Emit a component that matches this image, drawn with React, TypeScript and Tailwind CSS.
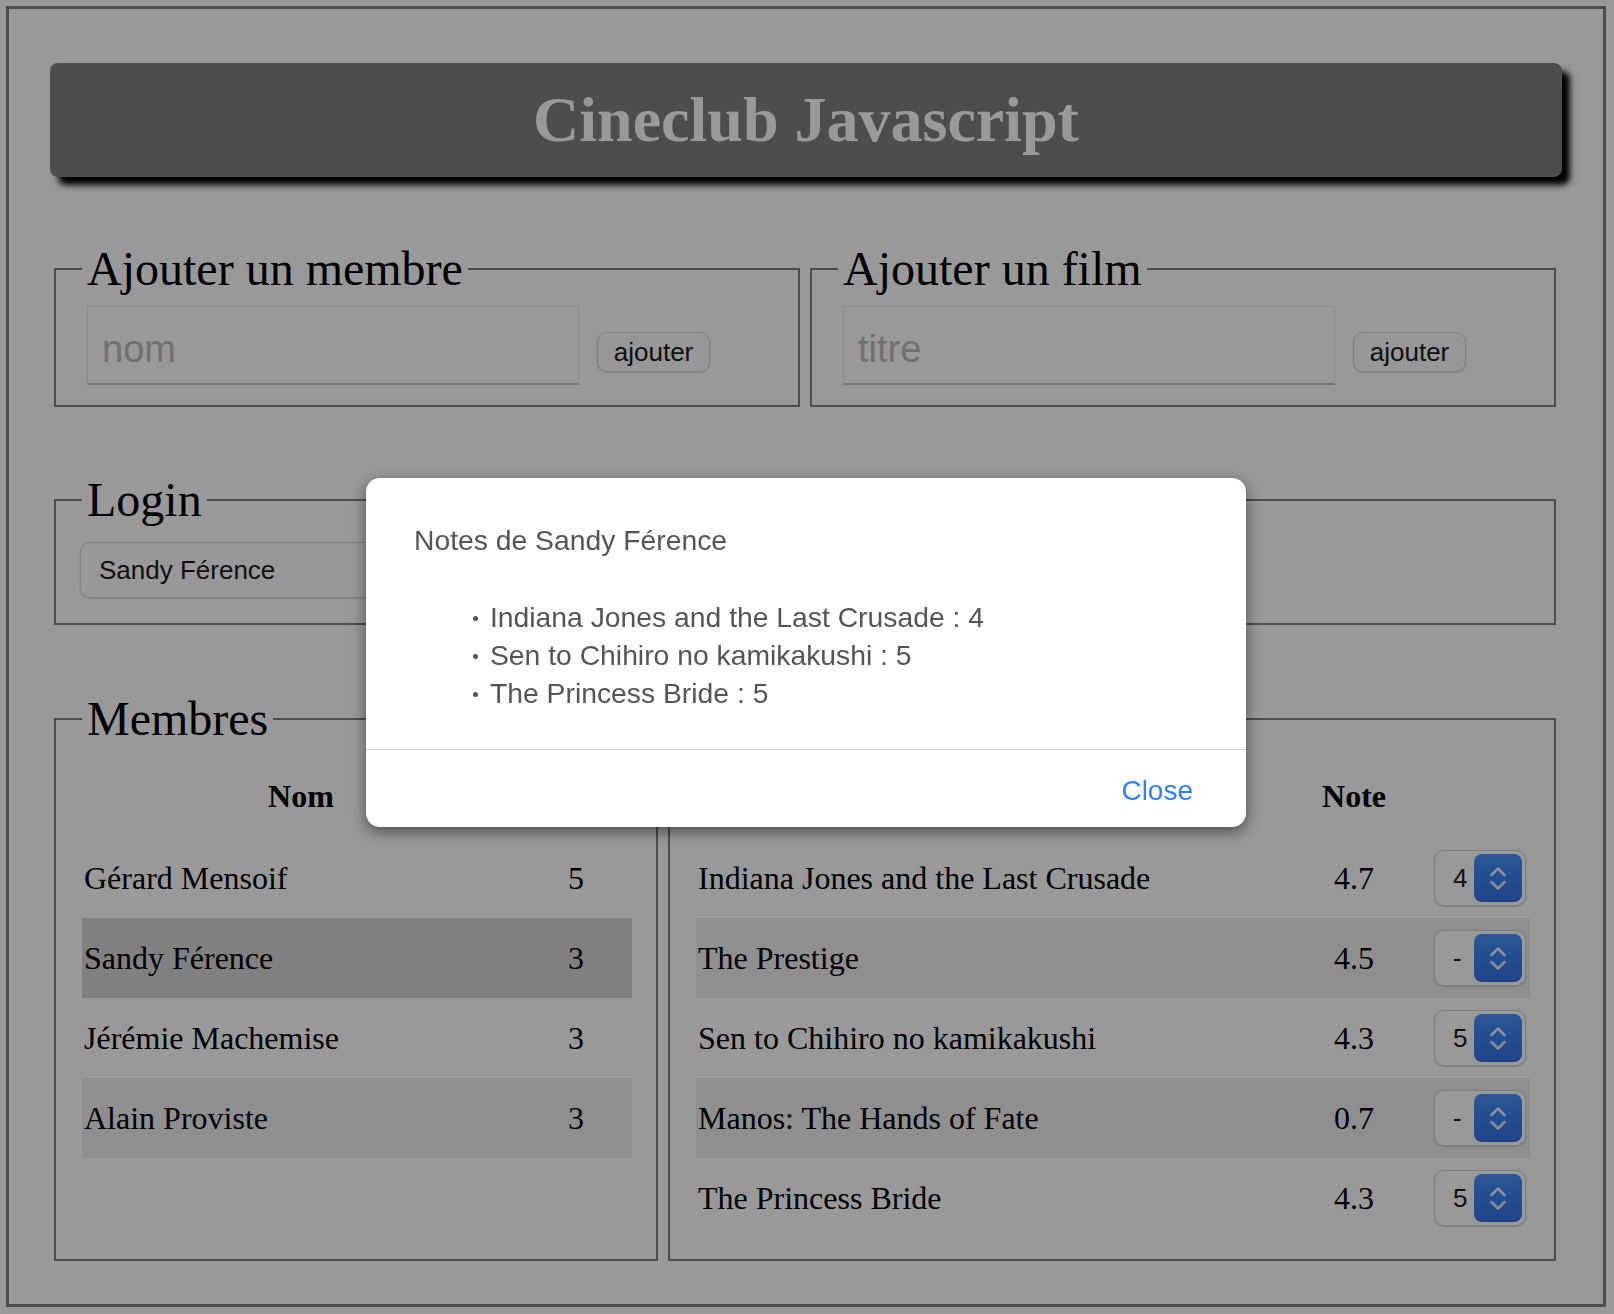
import React from "react";

const serif = "font-['Liberation_Serif','Times_New_Roman',serif]";
const sans = "font-['Liberation_Sans',Arial,sans-serif]";

const membres = [
  { nom: "Gérard Mensoif", n: 5 },
  { nom: "Sandy Férence", n: 3 },
  { nom: "Jérémie Machemise", n: 3 },
  { nom: "Alain Proviste", n: 3 },
];

const films = [
  { titre: "Indiana Jones and the Last Crusade", note: "4.7", vote: "4" },
  { titre: "The Prestige", note: "4.5", vote: "-" },
  { titre: "Sen to Chihiro no kamikakushi", note: "4.3", vote: "5" },
  { titre: "Manos: The Hands of Fate", note: "0.7", vote: "-" },
  { titre: "The Princess Bride", note: "4.3", vote: "5" },
];

const notes = [
  "Indiana Jones and the Last Crusade : 4",
  "Sen to Chihiro no kamikakushi : 5",
  "The Princess Bride : 5",
];

const Legend = ({ children }: { children: React.ReactNode }) => (
  <legend className="px-[5px] text-[48px] leading-[53px] text-black">
    {children}
  </legend>
);

const AddForm = ({ title, placeholder }: { title: string; placeholder: string }) => (
  <fieldset className="w-[746px] border-2 border-[#808080] px-[26px] pt-[11px] pb-[20px]">
    <Legend>{title}</Legend>
    <div className={"flex items-start " + sans}>
      <input
        placeholder={placeholder}
        className="ml-[5px] w-[492px] h-[79px] border border-[#e8e8e8] border-b-2 border-b-[#c6c6c6] bg-transparent pl-[14px] pt-[8px] text-[38px] text-black outline-none placeholder:text-[#bcbcbc]"
      />
      <button className="ml-[18px] mt-[26px] w-[113px] h-[40px] rounded-[10px] border border-[#d6d6d6] bg-[#fcfcfc] text-[26px] leading-none text-[#1a1a1a] shadow-[0_1px_2px_rgba(0,0,0,0.15)]">
        ajouter
      </button>
    </div>
  </fieldset>
);

const VoteSelect = ({ value }: { value: string }) => (
  <div className={"flex items-center w-[92px] h-[56px] rounded-[10px] border border-[#d2d2d2] bg-white shadow-[0_1px_2px_rgba(0,0,0,0.15)] " + sans}>
    <span className="pl-[18px] text-[26px] text-[#1a1a1a]">{value}</span>
    <div className="ml-auto mr-[3px] w-[48px] h-[48px] rounded-[8px] bg-gradient-to-b from-[#4a92fc] to-[#3270e6]">
      <svg width="48" height="48" viewBox="0 0 48 48" fill="none">
        <path d="M17.5 21 L24 14.5 L30.5 21" stroke="#ffffff" strokeOpacity="0.85" strokeWidth="2.6" strokeLinecap="round" strokeLinejoin="round" />
        <path d="M17.5 28 L24 34.5 L30.5 28" stroke="#ffffff" strokeOpacity="0.85" strokeWidth="2.6" strokeLinecap="round" strokeLinejoin="round" />
      </svg>
    </div>
  </div>
);

export default function App() {
  return (
    <div className={"relative w-[1614px] h-[1314px] bg-white " + serif}>
      <div className="ml-[6px] pt-[6px]">
        <div className="w-[1600px] h-[1301px] border-[3px] border-[#808080]">
          {/* header */}
          <div className="mx-[41px] mt-[54px] h-[114px] flex items-center justify-center rounded-[8px] bg-[#808080] shadow-[8px_8px_6px_#000]">
            <h1 className="text-[64px] font-bold text-white leading-[74px]">
              Cineclub Javascript
            </h1>
          </div>

          <div className="ml-[45px] w-[1502px]">
            {/* ajouter */}
            <div className="mt-[65px] flex gap-[10px]">
              <AddForm title="Ajouter un membre" placeholder="nom" />
              <AddForm title="Ajouter un film" placeholder="titre" />
            </div>

            {/* login */}
            <fieldset className="mt-[66px] border-2 border-[#808080] px-[26px] pt-[16px] pb-[25px]">
              <Legend>Login</Legend>
              <div className={"-ml-[2px] flex items-center w-[420px] h-[56px] rounded-[10px] border border-[#d8d8d8] bg-[#fdfdfd] pl-[18px] text-[26px] text-[#1a1a1a] shadow-[0_1px_2px_rgba(0,0,0,0.12)] " + sans}>
                Sandy Férence
              </div>
            </fieldset>

            {/* tables */}
            <div className="mt-[67px] flex gap-[10px]">
              <fieldset className="w-[604px] border-2 border-[#808080] pl-[26px] pr-[24px] pt-[9px] pb-[21px]">
                <Legend>Membres</Legend>
                <div className="grid grid-cols-[438px_1fr] h-[84px] items-center text-[32px] font-bold">
                  <div className="text-center">Nom</div>
                  <div className="text-center">Votes</div>
                </div>
                {membres.map((m, i) => (
                  <div
                    key={m.nom}
                    className={
                      "grid grid-cols-[438px_1fr] h-[80px] items-center text-[32px] text-black " +
                      (i === 1 ? "bg-[#d5d5d5]" : i % 2 === 1 ? "bg-[#eeeeee]" : "")
                    }
                  >
                    <div className="pl-[2px]">{m.nom}</div>
                    <div className="text-center">{m.n}</div>
                  </div>
                ))}
              </fieldset>

              <fieldset className="w-[888px] border-2 border-[#808080] pl-[26px] pr-[24px] pt-[9px] pb-[21px]">
                <Legend>Films</Legend>
                <div className="grid grid-cols-[598px_120px_1fr] h-[84px] items-center text-[32px] font-bold">
                  <div className="text-center">Titre</div>
                  <div className="text-center">Note</div>
                  <div />
                </div>
                {films.map((f, i) => (
                  <div
                    key={f.titre}
                    className={
                      "grid grid-cols-[598px_120px_1fr] h-[80px] items-center text-[32px] text-black " +
                      (i % 2 === 1 ? "bg-[#eeeeee]" : "")
                    }
                  >
                    <div className="pl-[2px]">{f.titre}</div>
                    <div className="text-center">{f.note}</div>
                    <div className="flex justify-end pr-[4px]">
                      <VoteSelect value={f.vote} />
                    </div>
                  </div>
                ))}
              </fieldset>
            </div>
          </div>
        </div>
      </div>

      {/* modal */}
      <div className="fixed inset-0 bg-black/40">
        <div className={"absolute left-[366px] top-[478px] w-[880px] rounded-[14px] bg-white shadow-[0_5px_15px_rgba(0,0,0,0.5)] " + sans}>
          <div className="px-[48px] pt-[46px] pb-[37px] text-[#555555]">
            <div className="text-[28.3px] leading-[32px]">Notes de Sandy Férence</div>
            <ul className="mt-[42px] pl-[59px]">
              {notes.map((n) => (
                <li key={n} className="flex items-center h-[38px] text-[28.3px]">
                  <span className="mr-[12px] mt-[2px] w-[5px] h-[5px] rounded-full bg-[#555555]" />
                  {n}
                </li>
              ))}
            </ul>
          </div>
          <div className="border-t border-[#d9d9d9] h-[78px] flex items-center justify-end pr-[53px] pt-[4px]">
            <span className="text-[28px] text-[#2f7ff7]">Close</span>
          </div>
        </div>
      </div>
    </div>
  );
}
